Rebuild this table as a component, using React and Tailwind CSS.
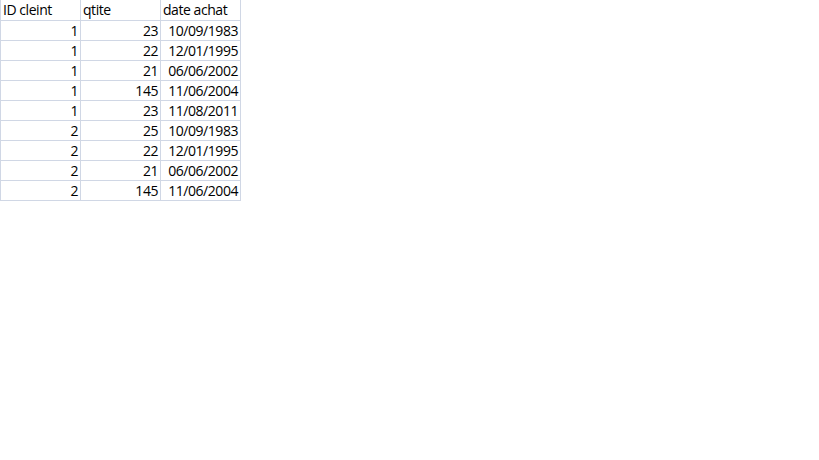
const rows = [
  [1, 23, '10/09/1983'],
  [1, 22, '12/01/1995'],
  [1, 21, '06/06/2002'],
  [1, 145, '11/06/2004'],
  [1, 23, '11/08/2011'],
  [2, 25, '10/09/1983'],
  [2, 22, '12/01/1995'],
  [2, 21, '06/06/2002'],
  [2, 145, '11/06/2004'],
];

export default function App() {
  return (
    <div className="w-[819px] h-[460px] bg-white text-[14px] text-black font-['Open_Sans',sans-serif] tracking-[-0.45px]">
      <div className="w-[241px] border-l border-[#d0d7e5]">
        <div className="flex h-[21px] border-b border-[#d0d7e5]">
          <div className="w-[80px] border-r border-[#d0d7e5] px-[2px] leading-[20px]">ID cleint</div>
          <div className="w-[80px] border-r border-[#d0d7e5] px-[2px] leading-[20px]">qtite</div>
          <div className="w-[80px] border-r border-[#d0d7e5] px-[2px] leading-[20px]">date achat</div>
        </div>
        {rows.map((r, i) => (
          <div key={i} className="flex h-[20px] border-b border-[#d0d7e5]">
            <div className="w-[80px] border-r border-[#d0d7e5] px-[2px] leading-[19px] text-right">{r[0]}</div>
            <div className="w-[80px] border-r border-[#d0d7e5] px-[2px] leading-[19px] text-right">{r[1]}</div>
            <div className="w-[80px] border-r border-[#d0d7e5] px-[2px] leading-[19px] text-right">{r[2]}</div>
          </div>
        ))}
      </div>
    </div>
  );
}
